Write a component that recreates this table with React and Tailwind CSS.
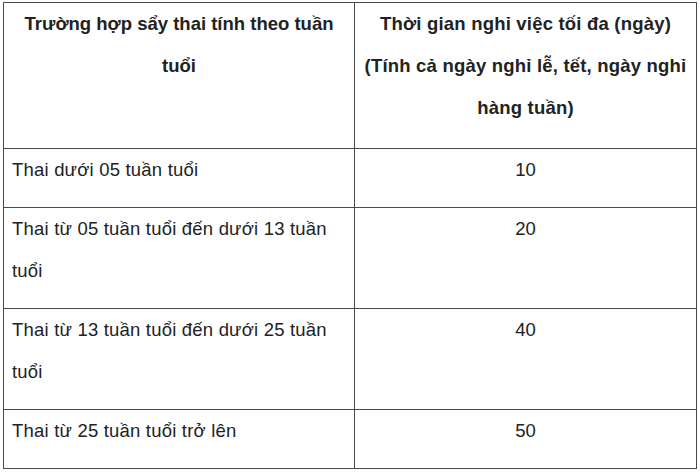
const rows = [
  { label: ["Thai dưới 05 tuần tuổi"], days: "10" },
  { label: ["Thai từ 05 tuần tuổi đến dưới 13 tuần", "tuổi"], days: "20" },
  { label: ["Thai từ 13 tuần tuổi đến dưới 25 tuần", "tuổi"], days: "40" },
  { label: ["Thai từ 25 tuần tuổi trở lên"], days: "50" },
];

const Lines = ({ lines }) =>
  lines.map((line, i) => (
    <span key={i} className="block whitespace-nowrap">
      {line}
    </span>
  ));

export default function App() {
  return (
    <div className="w-[700px] h-[472px] overflow-hidden bg-white pt-[2px] pl-[3px] font-['Liberation_Sans',Arial,sans-serif] leading-[42px] text-[#222]">
      <table className="w-[694px] border-collapse table-fixed">
        <colgroup>
          <col className="w-[351px]" />
          <col />
        </colgroup>
        <thead>
          <tr className="text-[18.5px]">
            <th className="border border-[#4a4a4a] px-[4px] pb-[19px] align-top text-center font-bold">
              <Lines lines={["Trường hợp sẩy thai tính theo tuần", "tuổi"]} />
            </th>
            <th className="border border-[#4a4a4a] px-[2px] pb-[19px] align-top text-center font-bold tracking-[0.2px]">
              <Lines
                lines={[
                  "Thời gian nghỉ việc tối đa (ngày)",
                  "(Tính cả ngày nghỉ lễ, tết, ngày nghỉ",
                  "hàng tuần)",
                ]}
              />
            </th>
          </tr>
        </thead>
        <tbody className="text-[18.5px]">
          {rows.map((row) => (
            <tr key={row.days}>
              <td className="border border-[#4a4a4a] px-[8px] pb-[16px] align-top text-left tracking-[0.2px]">
                <Lines lines={row.label} />
              </td>
              <td className="border border-[#4a4a4a] px-[4px] pb-[16px] align-top text-center">
                {row.days}
              </td>
            </tr>
          ))}
        </tbody>
      </table>
    </div>
  );
}
